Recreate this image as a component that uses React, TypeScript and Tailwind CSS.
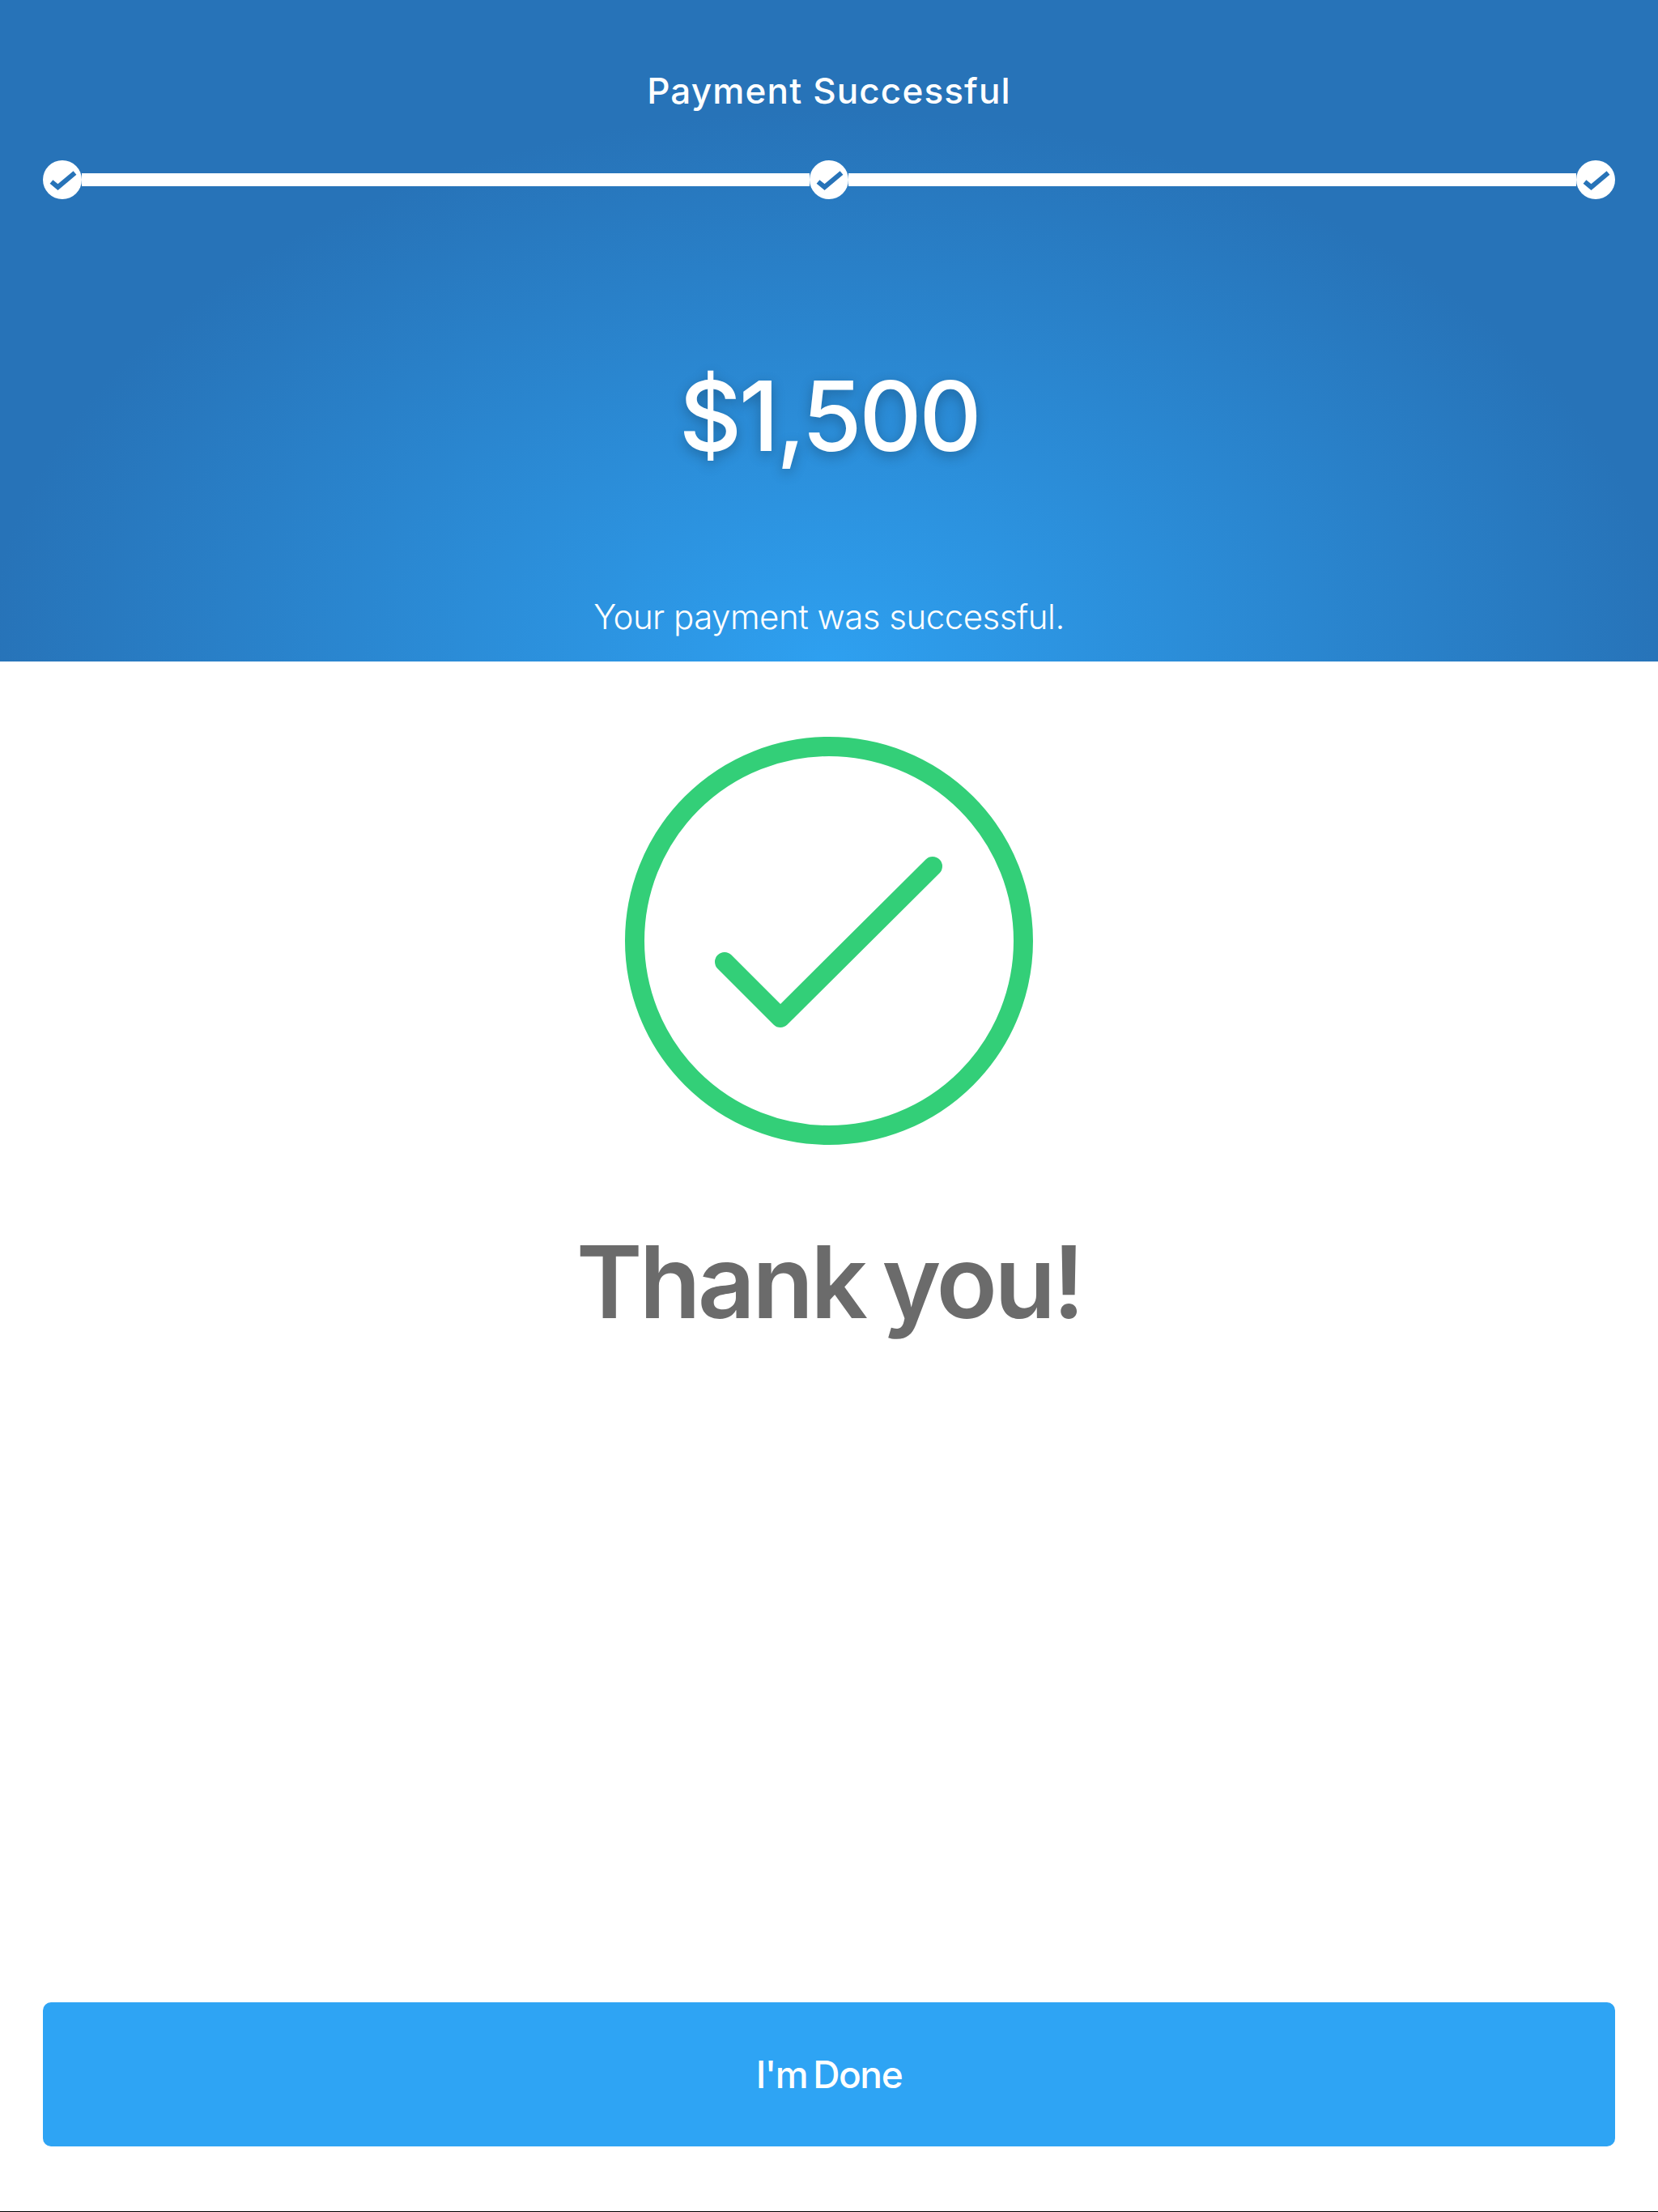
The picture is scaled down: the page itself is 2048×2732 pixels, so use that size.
import React from "react";

function StepDot() {
  return (
    <div className="w-12 h-12 rounded-full bg-white shrink-0">
      <svg width="48" height="48" viewBox="0 0 48 48" fill="none">
        <path d="M10.5 26.5L18.5 33L39.5 15.5" stroke="#2773b8" strokeWidth="6" />
      </svg>
    </div>
  );
}

export default function App() {
  return (
    <div className="w-[2048px] h-[2732px] bg-white flex flex-col border-b border-black font-['Inter',sans-serif]">
      <header className="h-[817px] shrink-0 flex flex-col items-center px-[53px] text-white bg-[radial-gradient(ellipse_1040px_680px_at_50%_100%,#2ea0f0,#2773b8)]">
        <h1 className="mt-[85px] h-[54px] leading-[54px] text-[44px] font-medium tracking-[1.15px]">Payment Successful</h1>
        <div className="mt-[59px] w-full flex items-center">
          <StepDot />
          <div className="flex-1 h-4 bg-white" />
          <StepDot />
          <div className="flex-1 h-4 bg-white" />
          <StepDot />
        </div>
        <div className="mt-[200px] h-[136px] leading-[136px] text-[120px] font-[450] tracking-[-3.5px] [text-shadow:0_5px_16px_rgba(0,0,0,0.25)]">$1,500</div>
        <p className="mt-[155px] h-[50px] leading-[50px] text-[42px] font-[350] tracking-[-0.5px]">Your payment was successful.</p>
      </header>
      <main className="flex-1 flex flex-col items-center px-[53px]">
        <svg className="mt-[93px]" width="504" height="504" viewBox="0 0 504 504" fill="none">
          <circle cx="252" cy="252" r="240" stroke="#33cf78" strokeWidth="24" />
          <path d="M123 278L192 347L380 160" stroke="#33cf78" strokeWidth="24" strokeLinecap="round" strokeLinejoin="round" />
        </svg>
        <h2 className="mt-[94px] h-[150px] leading-[150px] text-[124px] font-semibold text-[#6b6b6b] tracking-[-3.8px] [word-spacing:-6px]">Thank you!</h2>
        <button className="mt-auto mb-[80px] w-full h-[178px] rounded-[10px] bg-[#2ea4f4] text-white text-[46px] font-medium tracking-[-1.4px] [word-spacing:-4px]">I'm Done</button>
      </main>
    </div>
  );
}
